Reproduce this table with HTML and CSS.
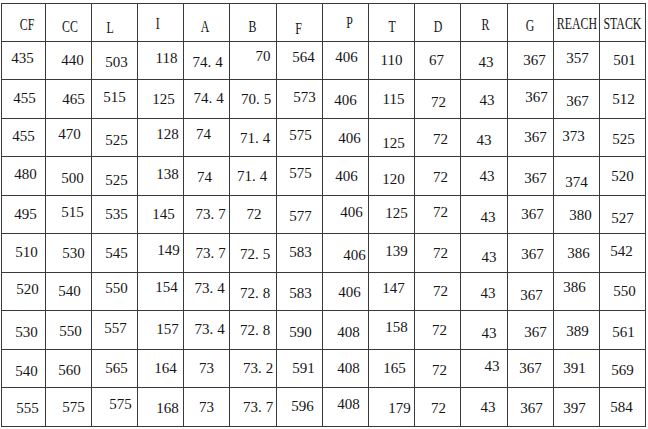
FILE: index.html
```html
<!DOCTYPE html>
<html>
<head>
<meta charset="utf-8">
<link rel="stylesheet" href="styles.css">
</head>
<body>
<div class="page">
<table class="grid">
<colgroup>
<col class="c44"><col class="c46"><col class="c46"><col class="c46"><col class="c46"><col class="c47"><col class="c46"><col class="c46"><col class="c46"><col class="c46"><col class="c47"><col class="c46"><col class="c46"><col class="c46">
</colgroup>
<thead>
<tr class="hd">
<th><span class="r4 d2">CF</span></th><th><span class="r2 d4">CC</span></th><th><span class="l4 d5">L</span></th><th><span class="l3 d1">I</span></th><th><span class="l2 d4">A</span></th><th><span class="d4">B</span></th><th><span class="l1 d6">F</span></th><th><span class="r4">P</span></th><th><span class="r1 d4">T</span></th><th><span class="d4">D</span></th><th><span class="r2 d2">R</span></th><th><span class="l1 d3">G</span></th><th><span class="d1">REACH</span></th><th><span class="d1">STACK</span></th>
</tr>
</thead>
<tbody>
<tr>
<td><span class="l1 u2">435</span></td><td><span class="r4">440</span></td><td><span class="r2 d2">503</span></td><td><span class="r6 u2">118</span></td><td><span class="r1 d2">74<i class="pt">.</i>4</span></td><td><span class="r10 u4">70</span></td><td><span class="r4 u3">564</span></td><td><span class="r1 u3">406</span></td><td><span>110</span></td><td><span class="l1">67</span></td><td><span class="r2 d2">43</span></td><td><span class="r4">367</span></td><td><span class="r1 u2">357</span></td><td><span class="r2">501</span></td>
</tr>
<tr>
<td><span class="r1 u1">455</span></td><td><span class="r5">465</span></td><td><span class="u2">515</span></td><td><span class="r3">125</span></td><td><span class="r2 u1">74<i class="pt">.</i>4</span></td><td><span class="r3">70<i class="pt">.</i>5</span></td><td><span class="r5 u2">573</span></td><td><span class="d1">406</span></td><td><span class="r2">115</span></td><td><span class="r1 d3">72</span></td><td><span class="r3 d1">43</span></td><td><span class="r6 u2">367</span></td><td><span class="r1 d2">367</span></td><td><span class="r1">512</span></td>
</tr>
<tr>
<td><span class="u1">455</span></td><td><span class="r1 u3">470</span></td><td><span class="r2 d3">525</span></td><td><span class="r7 u3">128</span></td><td><span class="l3 u3">74</span></td><td><span class="r2 d1">71<i class="pt">.</i>4</span></td><td><span class="r1 u2">575</span></td><td><span class="r4 d1">406</span></td><td><span class="r2 d6">125</span></td><td><span class="r3 d2">72</span></td><td><span class="d3">43</span></td><td><span class="r5">367</span></td><td><span class="l3 u1">373</span></td><td><span class="r1 d2">525</span></td>
</tr>
<tr>
<td><span class="r2 u2">480</span></td><td><span class="r4 d2">500</span></td><td><span class="r2 d4">525</span></td><td><span class="r7 u2">138</span></td><td><span class="l2 d1">74</span></td><td><span class="l1">71<i class="pt">.</i>4</span></td><td><span class="r1 u3">575</span></td><td><span class="r1">406</span></td><td><span class="r2 d3">120</span></td><td><span class="r3 d1">72</span></td><td><span class="r3">43</span></td><td><span class="r5 d2">367</span></td><td><span class="d6">374</span></td><td><span>520</span></td>
</tr>
<tr>
<td><span class="r2">495</span></td><td><span class="r4 u2">515</span></td><td><span class="r2">535</span></td><td><span class="r3">145</span></td><td><span class="r4">73<i class="pt">.</i>7</span></td><td><span class="r1">72</span></td><td><span class="r1 d2">577</span></td><td><span class="r6 u2">406</span></td><td><span class="r5 u1">125</span></td><td><span class="r3 u2">72</span></td><td><span class="r4 d3">43</span></td><td><span class="r2">367</span></td><td><span class="r4 d1">380</span></td><td><span class="d4">527</span></td>
</tr>
<tr>
<td><span class="r3 u1">510</span></td><td><span class="r5">530</span></td><td><span class="r2">545</span></td><td><span class="r8 u3">149</span></td><td><span class="r4">73<i class="pt">.</i>7</span></td><td><span class="r2 d1">72<i class="pt">.</i>5</span></td><td><span class="r1 u1">583</span></td><td><span class="r9 d2">406</span></td><td><span class="r5 u2">139</span></td><td><span class="r3">72</span></td><td><span class="r5 d4">43</span></td><td><span class="r2 d1">367</span></td><td><span class="r2">386</span></td><td><span class="l1 u2">542</span></td>
</tr>
<tr>
<td><span class="r4 u2">520</span></td><td><span class="r1">540</span></td><td><span class="r2 u3">550</span></td><td><span class="r6 u4">154</span></td><td><span class="r3 u3">73<i class="pt">.</i>4</span></td><td><span class="r2 d2">72<i class="pt">.</i>8</span></td><td><span class="r1 d2">583</span></td><td><span class="r4 d1">406</span></td><td><span class="r2 u3">147</span></td><td><span class="r3">72</span></td><td><span class="r4 d2">43</span></td><td><span class="r1 d4">367</span></td><td><span class="l2 u4">386</span></td><td><span class="r2">550</span></td>
</tr>
<tr>
<td><span class="r3 d2">530</span></td><td><span class="r2 d1">550</span></td><td><span class="r1 u2">557</span></td><td><span class="r7 u1">157</span></td><td><span class="r3 u1">73<i class="pt">.</i>4</span></td><td><span class="r2">72<i class="pt">.</i>8</span></td><td><span class="r1 d2">590</span></td><td><span class="r3 d2">408</span></td><td><span class="r5 u3">158</span></td><td><span class="r2">72</span></td><td><span class="r5 d3">43</span></td><td><span class="r5 d2">367</span></td><td><span class="r1 d1">389</span></td><td><span class="r1 d2">561</span></td>
</tr>
<tr>
<td><span class="r3 d3">540</span></td><td><span class="r1 d2">560</span></td><td><span class="r2">565</span></td><td><span class="r5">164</span></td><td><span>73</span></td><td><span class="r5">73<i class="pt">.</i>2</span></td><td><span class="r4">591</span></td><td><span class="r3">408</span></td><td><span class="r3">165</span></td><td><span class="r2 d2">72</span></td><td><span class="r8 u2">43</span></td><td><span>367</span></td><td><span class="l2">391</span></td><td><span class="d2">569</span></td>
</tr>
<tr>
<td><span class="r4 d1">555</span></td><td><span class="r5">575</span></td><td><span class="r6 u3">575</span></td><td><span class="r7 d1">168</span></td><td><span>73</span></td><td><span class="r5">73<i class="pt">.</i>7</span></td><td><span class="r3 u1">596</span></td><td><span class="r3 u3">408</span></td><td><span class="r8 d1">179</span></td><td><span class="r1 d1">72</span></td><td><span class="r4">43</span></td><td><span class="r1 d1">367</span></td><td><span class="l2 d1">397</span></td><td><span class="l1">584</span></td>
</tr>
</tbody>
</table>
</div>
</body>
</html>
```
FILE: styles.css
```css
html, body {
  margin: 0;
  padding: 0;
  background: #ffffff;
}

.page {
  padding: 3px 0 0 1px;
}

.grid {
  border-collapse: collapse;
  table-layout: fixed;
  width: 645px;
  font-family: "Liberation Serif", "Noto Sans CJK SC", serif;
  font-size: 15px;
  color: #161616;
}

.c44 { width: 44px; }
.c46 { width: 46px; }
.c47 { width: 47px; }

.grid th,
.grid td {
  border: 1px solid #3a3a3a;
  padding: 0;
  text-align: center;
  vertical-align: middle;
  line-height: 15px;
  height: 37px;
  font-weight: normal;
  overflow: visible;
  white-space: nowrap;
}

.grid tbody tr:nth-child(even) td {
  height: 38px;
}

.grid span {
  display: inline-block;
  line-height: 15px;
}

.hd span {
  margin-left: -14px;
  margin-right: -14px;
  transform: scaleX(0.72);
  font-size: 16.5px;
}

.pt {
  font-style: normal;
  margin-right: 4px;
}

.grid .r1 { margin-left: 2px; }
.grid .r2 { margin-left: 4px; }
.grid .r3 { margin-left: 6px; }
.grid .r4 { margin-left: 8px; }
.grid .r5 { margin-left: 10px; }
.grid .r6 { margin-left: 12px; }
.grid .r7 { margin-left: 14px; }
.grid .r8 { margin-left: 16px; }
.grid .r9 { margin-left: 18px; }
.grid .r10 { margin-left: 20px; }

.grid .l1 { margin-right: 2px; }
.grid .l2 { margin-right: 4px; }
.grid .l3 { margin-right: 6px; }
.grid .l4 { margin-right: 8px; }

.hd .r1 { margin-left: -12px; }
.hd .r2 { margin-left: -10px; }
.hd .r4 { margin-left: -6px; }
.hd .l1 { margin-right: -12px; }
.hd .l2 { margin-right: -10px; }
.hd .l3 { margin-right: -8px; }
.hd .l4 { margin-right: -6px; }

.grid .u1 { margin-bottom: 2px; }
.grid .u2 { margin-bottom: 4px; }
.grid .u3 { margin-bottom: 6px; }
.grid .u4 { margin-bottom: 8px; }

.grid .d1 { margin-top: 2px; }
.grid .d2 { margin-top: 4px; }
.grid .d3 { margin-top: 6px; }
.grid .d4 { margin-top: 8px; }
.grid .d5 { margin-top: 10px; }
.grid .d6 { margin-top: 12px; }
```
